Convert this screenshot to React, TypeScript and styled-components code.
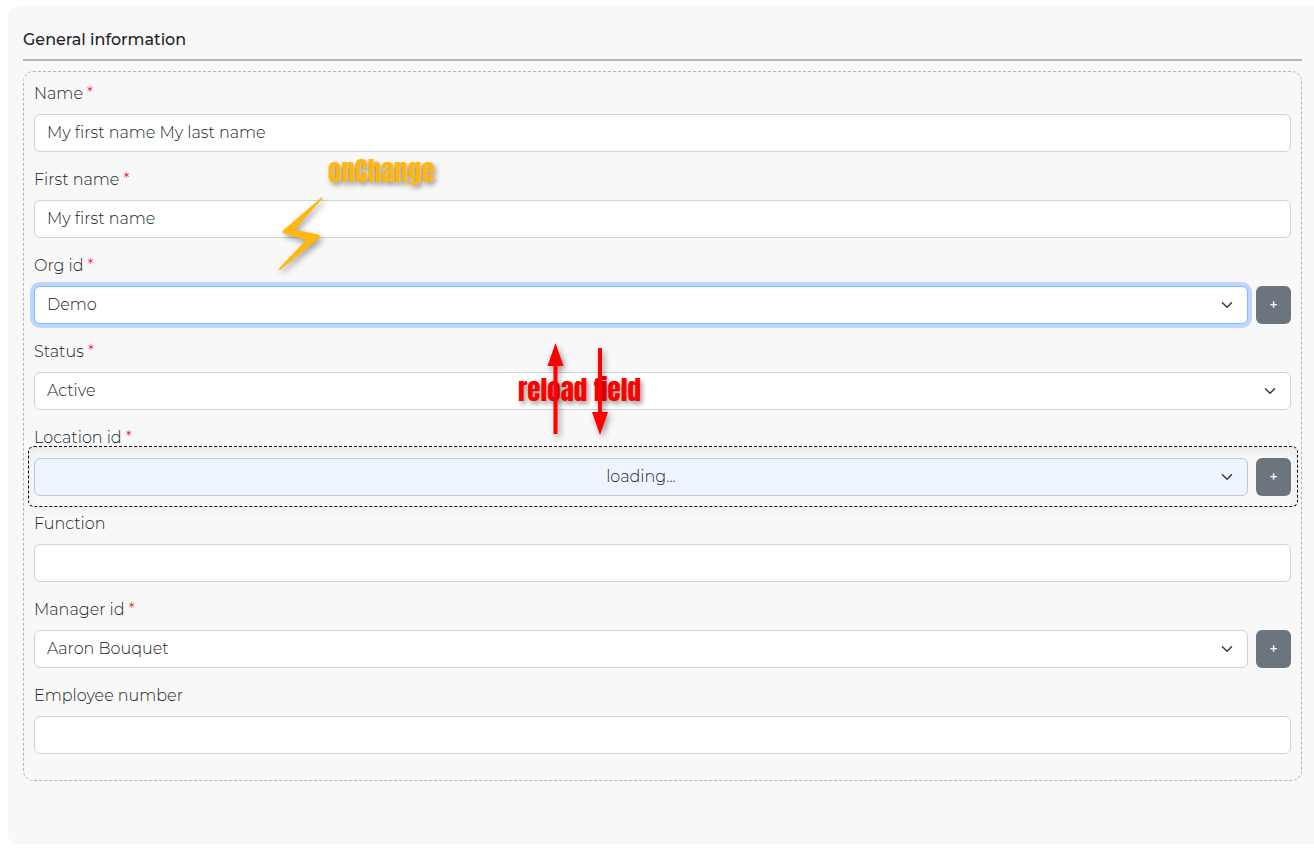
import React from "react";
import styled, { createGlobalStyle, css } from "styled-components";

const GlobalStyle = createGlobalStyle`
  *, *::before, *::after { box-sizing: border-box; }
  body {
    margin: 0;
    background: #fff;
    color: #212529;
    font-family: Montserrat, Inter, "Open Sans", sans-serif;
    font-size: 16px;
    font-weight: 350;
    line-height: 24px;
  }
`;

const Page = styled.main`
  padding: 6px 0 12px 8px;
`;

const Panel = styled.section`
  padding: 22px 12px 63px 15px;
  border-radius: 10px 0 0 10px;
  background: #f8f8f8;
`;

const Title = styled.h2`
  margin: 0 0 10px;
  padding-bottom: 7px;
  border-bottom: 2px solid #b5b5b5;
  font-size: 16px;
  font-weight: 500;
  line-height: 24px;
`;

const Form = styled.form`
  position: relative;
  display: flex;
  flex-direction: column;
  gap: 16px;
  padding: 10px 10px 26px;
  border: 1px dashed #b5b5b5;
  border-radius: 10px;
`;

const Field = styled.div`
  display: flex;
  flex-direction: column;
  gap: 8px;
`;

const Label = styled.label`
  display: block;
`;

const Required = styled.span`
  color: #ff0019;
`;

const Controls = styled.div<{ $outlined?: boolean }>`
  position: relative;
  display: flex;
  gap: 8px;

  ${(p) =>
    p.$outlined &&
    css`
      &::after {
        content: "";
        position: absolute;
        inset: -12px -7px -11px -6px;
        border: 1px dashed #000;
        border-radius: 6px;
        box-shadow: inset 0 4px 10px rgba(0, 0, 0, 0.07), 0 3px 8px rgba(0, 0, 0, 0.04);
        pointer-events: none;
      }
    `}
`;

const controlStyle = css`
  width: 100%;
  height: 38px;
  padding: 0 12px;
  border: 1px solid #ced4da;
  border-radius: 6px;
  background: #fff;
  color: #212529;
  font-family: inherit;
  font-size: 16px;
  font-weight: inherit;
  line-height: 24px;
  outline: none;
`;

const TextInput = styled.input`
  ${controlStyle}
  padding-bottom: 2px;
`;

const SelectWrap = styled.div`
  display: grid;
  flex: 1;
  align-items: center;
  min-width: 0;

  > * {
    grid-area: 1 / 1;
  }
`;

const Select = styled.select<{ $active?: boolean; $loading?: boolean }>`
  ${controlStyle}
  appearance: none;
  ${(p) =>
    p.$active &&
    css`
      border-color: #86b7fe;
      box-shadow: 0 0 0 4px #bfd7fb;
    `}
  ${(p) =>
    p.$loading &&
    css`
      border-color: #bcc8df;
      background: #eef5ff;
      text-align: center;
      text-align-last: center;
    `}
`;

const Chevron = styled.svg`
  justify-self: end;
  width: 12px;
  height: 12px;
  margin-right: 15px;
  pointer-events: none;
`;

const AddButton = styled.button`
  width: 35px;
  height: 38px;
  padding: 0;
  border: 0;
  border-radius: 6px;
  background: #6c757d;
  color: #fff;
  font-family: inherit;
  font-size: 14px;
  font-weight: 500;
`;

const Note = styled.span`
  font-family: Impact, Anton, Roboto, sans-serif;
  font-size: 27px;
  font-weight: 400;
  line-height: 28px;
  white-space: nowrap;
  text-shadow: 2px 3px 5px rgba(0, 0, 0, 0.4);
`;

const Drawing = styled.svg`
  overflow: visible;
  filter: drop-shadow(2px 3px 3px rgba(0, 0, 0, 0.4));
`;

const ChangeMark = styled.div`
  position: absolute;
  top: 85px;
  left: 254px;
  display: flex;
  gap: 4px;
  height: 114px;
  color: #ffb70f;
  pointer-events: none;

  ${Drawing} {
    align-self: flex-end;
  }
`;

const ReloadMark = styled.div`
  position: absolute;
  top: 271px;
  left: 494px;
  display: grid;
  place-items: center;
  color: #f00;
  pointer-events: none;

  > * {
    grid-area: 1 / 1;
  }
`;

type FieldData = {
  id: string;
  label: string;
  value?: string;
  required?: boolean;
  select?: boolean;
  add?: boolean;
  active?: boolean;
  loading?: boolean;
};

const fields: FieldData[] = [
  { id: "name", label: "Name", value: "My first name My last name", required: true },
  { id: "first-name", label: "First name", value: "My first name", required: true },
  { id: "org", label: "Org id", value: "Demo", required: true, select: true, add: true, active: true },
  { id: "status", label: "Status", value: "Active", required: true, select: true },
  { id: "location", label: "Location id", value: "loading...", required: true, select: true, add: true, loading: true },
  { id: "function", label: "Function" },
  { id: "manager", label: "Manager id", value: "Aaron Bouquet", required: true, select: true, add: true },
  { id: "employee", label: "Employee number" },
];

function FormField({ id, label, value, required, select, add, active, loading }: FieldData) {
  return (
    <Field>
      <Label htmlFor={id}>
        {label}
        {required && <Required> *</Required>}
      </Label>
      <Controls $outlined={loading}>
        {select ? (
          <SelectWrap>
            <Select id={id} $active={active} $loading={loading} defaultValue={value}>
              <option>{value}</option>
            </Select>
            <Chevron viewBox="0 0 16 16" aria-hidden="true">
              <path d="m2 5 6 6 6-6" fill="none" stroke="#343a40" strokeWidth="2" strokeLinecap="round" strokeLinejoin="round" />
            </Chevron>
          </SelectWrap>
        ) : (
          <TextInput id={id} type="text" defaultValue={value} />
        )}
        {add && <AddButton type="button" aria-label={`Add ${label}`}>+</AddButton>}
      </Controls>
    </Field>
  );
}

export default function App() {
  return (
    <>
      <GlobalStyle />
      <Page>
        <Panel>
          <Title>General information</Title>
          <Form>
            {fields.map((field) => (
              <FormField key={field.id} {...field} />
            ))}
            <ChangeMark>
              <Drawing width="46" height="74" viewBox="0 0 46 74" aria-hidden="true">
                <path d="M44 0 4.5 34V36L28 43 0.5 72 2 73 41.5 41V38L16.5 32.5 44.5 1.5Z" fill="currentColor" />
              </Drawing>
              <Note>onChange</Note>
            </ChangeMark>
            <ReloadMark>
              <Drawing width="62" height="94" viewBox="0 0 62 94" aria-hidden="true">
                <path d="M7.500 0 15.500 23H9.500V91H5.500V23H-0.500Z M50 5H54V69H60L52 92 44 69H50Z" fill="currentColor" />
              </Drawing>
              <Note>reload field</Note>
            </ReloadMark>
          </Form>
        </Panel>
      </Page>
    </>
  );
}
